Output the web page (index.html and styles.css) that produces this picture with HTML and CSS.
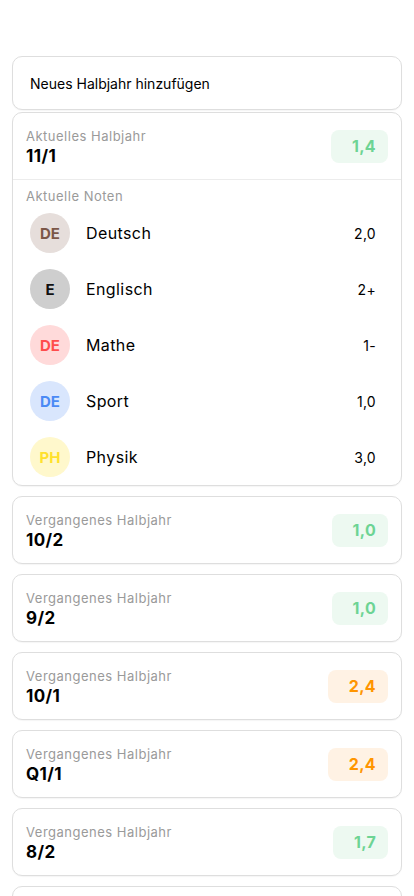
FILE: index.html
```html
<!DOCTYPE html>
<html lang="de">
<head>
<meta charset="utf-8">
<title>Halbjahre</title>
<link rel="stylesheet" href="styles.css">
</head>
<body>
<main class="list">
  <div class="card add">Neues Halbjahr hinzufügen</div>

  <section class="card current">
    <div class="term">
      <div class="term-text">
        <div class="term-label">Aktuelles Halbjahr</div>
        <div class="term-name">11/1</div>
      </div>
      <div class="badge good">1,4</div>
    </div>
    <div class="grades">
      <div class="grades-label">Aktuelle Noten</div>
      <div class="rows">
        <div class="row"><span class="avatar brown">DE</span><span class="subject">Deutsch</span><span class="grade">2,0</span></div>
        <div class="row"><span class="avatar gray">E</span><span class="subject">Englisch</span><span class="grade">2+</span></div>
        <div class="row"><span class="avatar red">DE</span><span class="subject">Mathe</span><span class="grade">1-</span></div>
        <div class="row"><span class="avatar blue">DE</span><span class="subject">Sport</span><span class="grade">1,0</span></div>
        <div class="row"><span class="avatar yellow">PH</span><span class="subject">Physik</span><span class="grade">3,0</span></div>
      </div>
    </div>
  </section>

  <section class="card past">
    <div class="term">
      <div class="term-text"><div class="term-label">Vergangenes Halbjahr</div><div class="term-name">10/2</div></div>
      <div class="badge good">1,0</div>
    </div>
  </section>
  <section class="card past">
    <div class="term">
      <div class="term-text"><div class="term-label">Vergangenes Halbjahr</div><div class="term-name">9/2</div></div>
      <div class="badge good">1,0</div>
    </div>
  </section>
  <section class="card past">
    <div class="term">
      <div class="term-text"><div class="term-label">Vergangenes Halbjahr</div><div class="term-name">10/1</div></div>
      <div class="badge warn">2,4</div>
    </div>
  </section>
  <section class="card past">
    <div class="term">
      <div class="term-text"><div class="term-label">Vergangenes Halbjahr</div><div class="term-name">Q1/1</div></div>
      <div class="badge warn">2,4</div>
    </div>
  </section>
  <section class="card past">
    <div class="term">
      <div class="term-text"><div class="term-label">Vergangenes Halbjahr</div><div class="term-name">8/2</div></div>
      <div class="badge good">1,7</div>
    </div>
  </section>
  <section class="card past stub"></section>
</main>
</body>
</html>
```
FILE: styles.css
```css
* { box-sizing: border-box; }
html, body { margin: 0; padding: 0; background: #ffffff; }
body {
  font-family: Inter, "Noto Sans", "Liberation Sans", sans-serif;
  color: #000;
  width: 414px;
  height: 896px;
  overflow: hidden;
}
.list {
  padding: 56px 12px 0 12px;
  display: flex;
  flex-direction: column;
}
.card {
  border: 1px solid #dedede;
  border-radius: 10px;
  background: #fff;
  box-shadow: 0 1px 1px rgba(0,0,0,0.04);
}
.add {
  height: 54px;
  display: flex;
  align-items: center;
  padding-left: 17px;
  font-size: 14px;
  font-weight: 400;
}
.current { margin-top: 2px; }
.past { margin-top: 10px; }
.stub { height: 68px; flex: none; }
.term {
  display: flex;
  align-items: center;
  justify-content: space-between;
  padding: 14px 13px 12px 13px;
  height: 66px;
}
.term-label {
  font-size: 13px;
  line-height: 18px;
  color: #9a9a9a;
  letter-spacing: 0.5px;
}
.term-name {
  font-size: 17px;
  line-height: 22px;
  font-weight: 700;
  letter-spacing: 0.4px;
}
.badge {
  height: 33px;
  border-radius: 8px;
  display: flex;
  align-items: center;
  padding: 0 12px 0 21px;
  font-size: 16px;
  font-weight: 700;
  letter-spacing: 0.3px;
  margin-top: -2px;
}
.badge.good { background: #edf9f1; color: #6dd494; }
.badge.warn { background: #fff2e4; color: #ff9500; }
.grades {
  border-top: 1px solid #ececec;
  padding: 7px 13px 8px 13px;
}
.grades-label {
  font-size: 13px;
  line-height: 18px;
  color: #9a9a9a;
  letter-spacing: 0.5px;
}
.rows {
  margin-top: 8px;
  display: flex;
  flex-direction: column;
  gap: 16px;
}
.row {
  display: flex;
  align-items: center;
  height: 40px;
  padding: 0 12px 0 4px;
}
.avatar {
  width: 40px;
  height: 40px;
  border-radius: 50%;
  display: flex;
  align-items: center;
  justify-content: center;
  font-size: 15px;
  font-weight: 700;
  flex: none;
}
.avatar.brown { background: #e6dedb; color: #7b5748; }
.avatar.gray { background: #cecece; color: #111; }
.avatar.red { background: #ffdada; color: #ff4d4d; }
.avatar.blue { background: #d9e6fd; color: #4b8af5; }
.avatar.yellow { background: #fff8cc; color: #ffe12e; }
.subject {
  margin-left: 16px;
  font-size: 16px;
  letter-spacing: 0.4px;
  flex: 1;
}
.grade {
  font-size: 14px;
  letter-spacing: 0.3px;
}
```
